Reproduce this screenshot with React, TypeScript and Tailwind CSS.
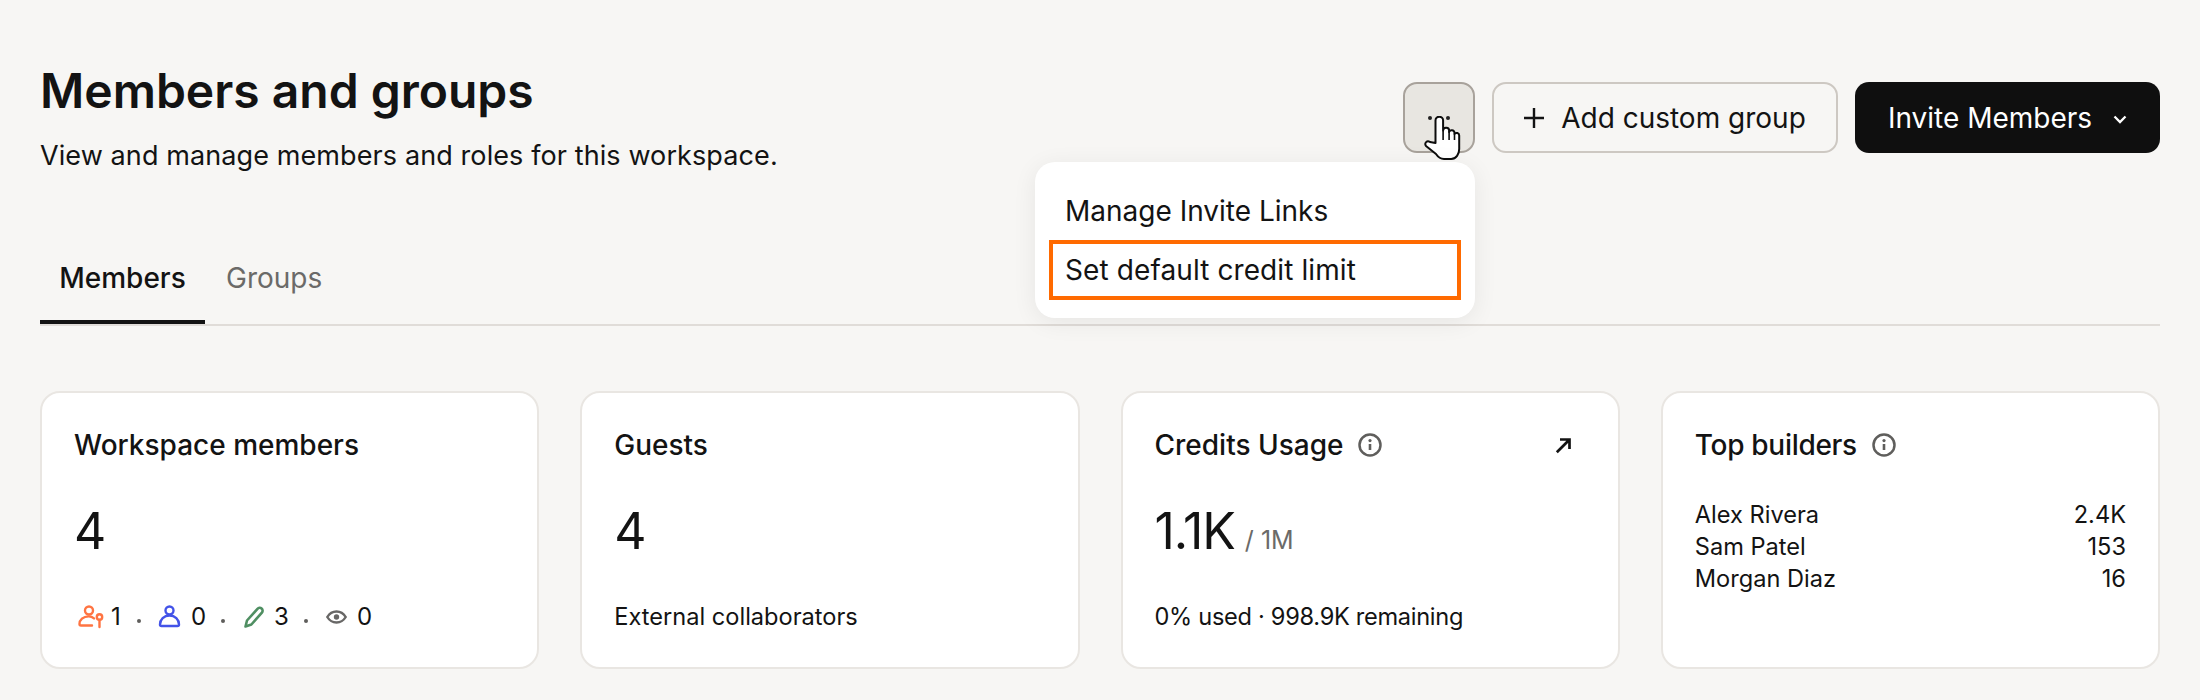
import type { ReactNode } from "react";

function InfoIcon() {
  return (
    <svg width="24" height="24" viewBox="0 0 24 24" fill="none" className="shrink-0">
      <circle cx="12" cy="12" r="10.500" stroke="#5f5e5c" strokeWidth="2.500" />
      <circle cx="12" cy="7.600" r="1.600" fill="#5f5e5c" />
      <path d="M12 11v6" stroke="#5f5e5c" strokeWidth="2.600" />
    </svg>
  );
}

function ArrowIcon() {
  return (
    <svg width="17" height="17" viewBox="0 0 17 17" fill="none">
      <path d="M1.800 15.200 13.800 3.200M5 2.500h9.500V12" stroke="#131313" strokeWidth="2.700" />
    </svg>
  );
}

function AdminIcon() {
  return (
    <svg width="26" height="24" viewBox="0 0 26 24" fill="none" stroke="#ff7442" strokeWidth="2.400" strokeLinecap="round">
      <circle cx="11" cy="5.500" r="4" />
      <path d="M16 13.400c-1.500-1.300-3-2-5.200-2C5 11.400 1.500 15 1.500 19c0 1 .6 1.500 1.500 1.500h11" />
      <circle cx="21.500" cy="12" r="2.700" />
      <path d="M21.500 15v7" />
    </svg>
  );
}

function MemberIcon() {
  return (
    <svg width="23" height="24" viewBox="0 0 23 24" fill="none" stroke="#4353e8" strokeWidth="2.400">
      <circle cx="11.500" cy="5.500" r="4" />
      <path d="M11.500 10.500c5.500 0 9.500 4 9.500 9 0 .9-.6 1.500-1.500 1.500h-16c-.9 0-1.500-.6-1.500-1.500 0-5 4-9 9.500-9Z" />
    </svg>
  );
}

function PencilIcon() {
  return (
    <svg width="20" height="24" viewBox="0 0 20 24" fill="none" stroke="#4f8f62" strokeWidth="2.600" strokeLinejoin="round">
      <path d="M1.500 21.500 3 15.500 13.500 3.800a2.900 2.900 0 0 1 4.400 3.800L7.400 19.500Z" />
    </svg>
  );
}

function EyeIcon() {
  return (
    <svg width="21" height="14" viewBox="0 0 21 14" fill="none">
      <path d="M1.300 7C3.500 3.300 6.700 1.500 10.500 1.500S17.500 3.300 19.700 7c-2.200 3.700-5.400 5.500-9.200 5.500S3.500 10.700 1.300 7Z" stroke="#686766" strokeWidth="2.400" />
      <circle cx="10.500" cy="7" r="2.700" fill="#686766" />
    </svg>
  );
}

function HandCursor() {
  return (
    <svg width="38" height="46" viewBox="0 0 38 46" fill="none" className="absolute left-[21px] top-[34px]">
      <path
        d="M11.500 27V4.500a3.800 3.800 0 0 1 7.600 0V14.500a3 3 0 0 1 6 .5v1a2.800 2.800 0 0 1 5.400.6V18a2.600 2.600 0 0 1 4.700 1.500V33c0 5-3 10-8 10H20c-4 0-6-2-8-5L2 30c-2-3 1-6 4-4Z"
        fill="#fff"
        stroke="#0c0c0c"
        strokeWidth="2"
        strokeLinejoin="round"
      />
      <path d="M19.100 14.500V24M25.100 15.500V24M30.500 17.500V24" stroke="#0c0c0c" strokeWidth="1.600" />
    </svg>
  );
}

function Card({ children }: { children: ReactNode }) {
  return (
    <div className="h-[278px] rounded-[20px] border-2 border-[#e9e6e2] bg-white px-[32px] pt-[34px] text-[#131313]">
      {children}
    </div>
  );
}

function CardTitle({ children }: { children: ReactNode }) {
  return <div className="flex h-[36px] items-center gap-[15px] text-[28px] leading-[36px] font-medium">{children}</div>;
}

function Dot() {
  return <span className="mt-[8px] block h-[4px] w-[4px] rounded-full bg-[#5f5e5c]" />;
}

export default function App() {
  return (
    <div className="h-[700px] w-[2200px] overflow-hidden bg-[#f7f6f4] px-[40px] pt-[61px] font-['Inter',sans-serif] text-[#131313]">
      <div className="flex items-start justify-between">
        <div>
          <h1 className="text-[48px] leading-[60px] font-semibold">Members and groups</h1>
          <p className="mt-[17px] text-[27px] leading-[36px] tracking-[0.1px]">View and manage members and roles for this workspace.</p>
        </div>
        <div className="mt-[21px] flex gap-[17px]">
          <div className="relative">
            <button className="flex h-[71px] w-[72px] items-center justify-center gap-[5px] rounded-[14px] border-2 border-[#a8a29b] bg-[#e8e6e1] pt-[1px]">
              <span className="h-[4px] w-[4px] rounded-full bg-[#222]" />
              <span className="h-[4px] w-[4px] rounded-full bg-[#222]" />
              <span className="h-[4px] w-[4px] rounded-full bg-[#222]" />
            </button>
            <div className="absolute top-[80px] right-0 z-10 h-[156px] w-[440px] rounded-[20px] bg-white shadow-[0_4px_24px_rgba(0,0,0,0.07)]">
              <div className="pt-[31px] pl-[30px] text-[28px] leading-[36px]">Manage Invite Links</div>
              <div className="mx-[14px] mt-[11px] h-[60px] border-4 border-[#ff6a00] pl-[12px] text-[28px] leading-[52px] tracking-[0.1px]">Set default credit limit</div>
            </div>
            <HandCursor />
          </div>
          <button className="flex h-[71px] w-[346px] items-center justify-center gap-[17px] rounded-[14px] border-2 border-[#cdc8c2] text-[28px]">
            <svg width="20" height="20" viewBox="0 0 20 20" fill="none">
              <path d="M10 0v20M0 10h20" stroke="#131313" strokeWidth="2.400" />
            </svg>
            Add custom group
          </button>
          <button className="flex h-[71px] w-[305px] items-center justify-center gap-[21px] rounded-[14px] bg-[#0f0f0f] text-[28px] text-white">
            Invite Members
            <svg width="14" height="9" viewBox="0 0 14 9" fill="none" className="mt-[3px]">
              <path d="M1.500 1.500 7 7l5.500-5.500" stroke="#fff" strokeWidth="2.300" />
            </svg>
          </button>
        </div>
      </div>

      <div className="mt-[66px] flex h-[86px] border-b-2 border-[#e0dcd8] text-[28px] leading-[36px]">
        <div className="w-[165px] border-b-4 border-[#131313] pt-[20px] text-center font-medium">Members</div>
        <div className="pt-[20px] pl-[21px] text-[#6b6a68]">Groups</div>
      </div>

      <div className="mt-[65px] grid grid-cols-4 gap-[41px]">
        <Card>
          <CardTitle>Workspace members</CardTitle>
          <div className="mt-[38px] text-[50px] leading-[60px]">4</div>
          <div className="mt-[41px] flex h-[30px] items-center text-[24px] leading-[30px]">
            <span className="ml-[4px]"><AdminIcon /></span>
            <span className="ml-[7px] w-[16px]">1</span>
            <span className="ml-[10px]"><Dot /></span>
            <span className="ml-[17px]"><MemberIcon /></span>
            <span className="ml-[10px] w-[16px]">0</span>
            <span className="ml-[14px]"><Dot /></span>
            <span className="ml-[19px]"><PencilIcon /></span>
            <span className="ml-[10px] w-[16px]">3</span>
            <span className="ml-[14px]"><Dot /></span>
            <span className="ml-[18px]"><EyeIcon /></span>
            <span className="ml-[10px]">0</span>
          </div>
        </Card>
        <Card>
          <CardTitle>Guests</CardTitle>
          <div className="mt-[38px] text-[50px] leading-[60px]">4</div>
          <div className="mt-[41px] text-[23.600px] leading-[30px]">External collaborators</div>
        </Card>
        <Card>
          <div className="flex items-center justify-between pr-[14px]">
            <CardTitle>Credits Usage <InfoIcon /></CardTitle>
            <ArrowIcon />
          </div>
          <div className="mt-[38px] flex h-[60px] items-baseline gap-[10px] text-[50px] leading-[60px] tracking-[-1px]">
            1.1K <span className="text-[25px] leading-[30px] tracking-normal text-[#6b6a68]">/ 1M</span>
          </div>
          <div className="mt-[41px] text-[23.600px] leading-[30px] tracking-[-0.300px]">0% used · 998.9K remaining</div>
        </Card>
        <Card>
          <CardTitle><span className="tracking-[-0.300px]">Top builders</span> <InfoIcon /></CardTitle>
          <div className="mt-[36px] flex flex-col text-[23.600px] leading-[32px]">
            <div className="flex justify-between"><span>Alex Rivera</span><span>2.4K</span></div>
            <div className="flex justify-between"><span>Sam Patel</span><span>153</span></div>
            <div className="flex justify-between"><span>Morgan Diaz</span><span>16</span></div>
          </div>
        </Card>
      </div>
    </div>
  );
}
